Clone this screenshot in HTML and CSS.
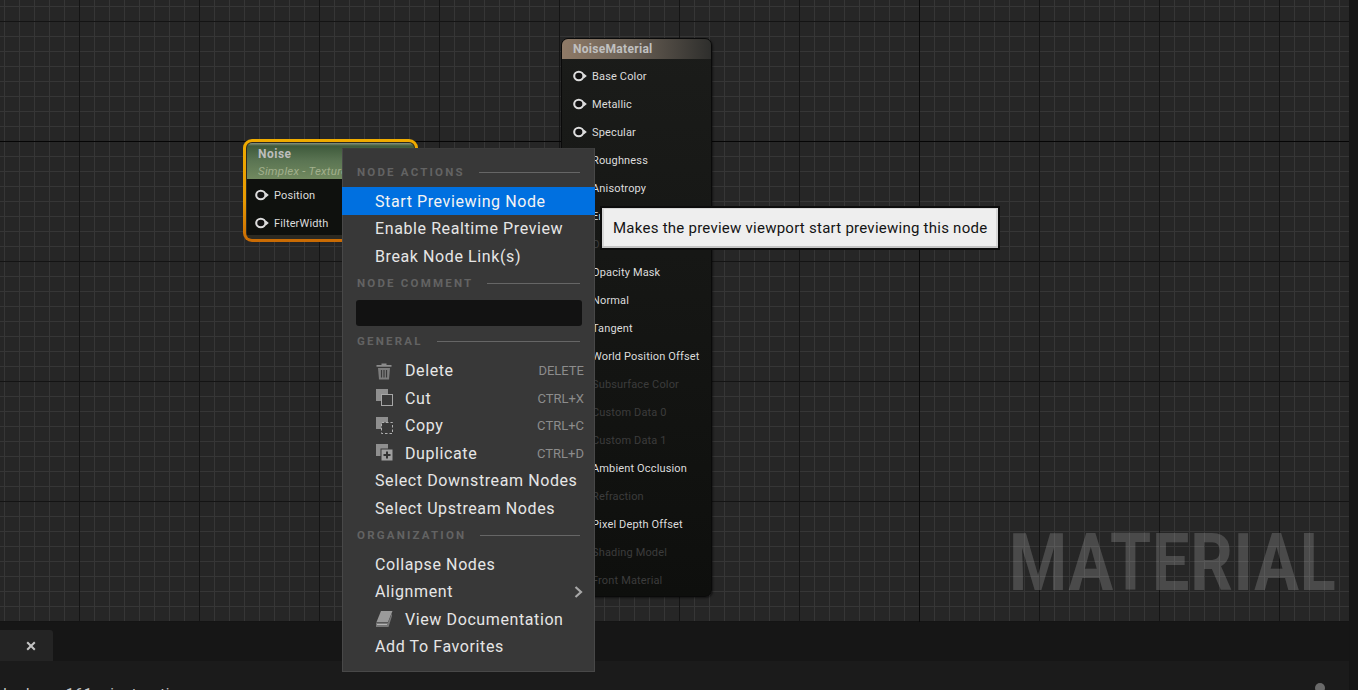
FILE: index.html
```html
<!DOCTYPE html>
<html lang="en">
<head>
    <meta charset="UTF-8">
    <title>Material Editor</title>
    <link rel="stylesheet" href="styles.css">
</head>
<body>
    <svg class="defs" width="0" height="0">
        <symbol id="pin" viewBox="0 0 14 12">
            <ellipse cx="5.8" cy="6" rx="4.6" ry="4.2" fill="#111" stroke="#dcdcdc" stroke-width="2.1"/>
            <path d="M10.8 3.6 L13.8 6 L10.8 8.4 Z" fill="#dcdcdc"/>
        </symbol>
    </svg>

    <div class="main">
        <div class="graph">
            <div class="watermark">MATERIAL</div>

            <div class="node-noise">
                <div class="noise-inner">
                    <div class="noise-head">
                        <div class="node-title">Noise</div>
                        <div class="node-sub">Simplex - Texture Based</div>
                    </div>
                    <div class="noise-body">
                        <div class="pin-row"><svg class="pin"><use href="#pin"/></svg><span>Position</span></div>
                        <div class="pin-row"><svg class="pin"><use href="#pin"/></svg><span>FilterWidth</span></div>
                    </div>
                </div>
            </div>

            <div class="node-material">
                <div class="material-head"><div class="node-title">NoiseMaterial</div></div>
                <div class="material-body">
                    <div class="pin-row"><svg class="pin"><use href="#pin"/></svg><span>Base Color</span></div>
                    <div class="pin-row"><svg class="pin"><use href="#pin"/></svg><span>Metallic</span></div>
                    <div class="pin-row"><svg class="pin"><use href="#pin"/></svg><span>Specular</span></div>
                    <div class="pin-row"><svg class="pin"><use href="#pin"/></svg><span>Roughness</span></div>
                    <div class="pin-row"><svg class="pin"><use href="#pin"/></svg><span>Anisotropy</span></div>
                    <div class="pin-row"><svg class="pin"><use href="#pin"/></svg><span>Emissive Color</span></div>
                    <div class="pin-row dim"><span>Opacity</span></div>
                    <div class="pin-row"><svg class="pin"><use href="#pin"/></svg><span>Opacity Mask</span></div>
                    <div class="pin-row"><svg class="pin"><use href="#pin"/></svg><span>Normal</span></div>
                    <div class="pin-row"><svg class="pin"><use href="#pin"/></svg><span>Tangent</span></div>
                    <div class="pin-row"><svg class="pin"><use href="#pin"/></svg><span>World Position Offset</span></div>
                    <div class="pin-row dim"><span>Subsurface Color</span></div>
                    <div class="pin-row dim"><span>Custom Data 0</span></div>
                    <div class="pin-row dim"><span>Custom Data 1</span></div>
                    <div class="pin-row"><svg class="pin"><use href="#pin"/></svg><span>Ambient Occlusion</span></div>
                    <div class="pin-row dim"><span>Refraction</span></div>
                    <div class="pin-row"><svg class="pin"><use href="#pin"/></svg><span>Pixel Depth Offset</span></div>
                    <div class="pin-row dim"><span>Shading Model</span></div>
                    <div class="pin-row dim"><span>Front Material</span></div>
                </div>
            </div>
        </div>

        <div class="tabbar">
            <div class="tab"><svg class="tab-close" viewBox="0 0 10 10"><path d="M1.2 1.2 L8.8 8.8 M8.8 1.2 L1.2 8.8" stroke="#c4c4c4" stroke-width="2"/></svg></div>
        </div>

        <div class="panel">
            <div class="stats">shader: 161 instructions</div>
            <div class="panel-dot"></div>
        </div>
    </div>

    <div class="menu">
        <div class="menu-heading"><span>NODE ACTIONS</span><i></i></div>
        <div class="menu-item active">Start Previewing Node</div>
        <div class="menu-item">Enable Realtime Preview</div>
        <div class="menu-item">Break Node Link(s)</div>

        <div class="menu-heading"><span>NODE COMMENT</span><i></i></div>
        <div class="comment-box"></div>

        <div class="menu-heading"><span>GENERAL</span><i></i></div>
        <div class="menu-item">
            <svg class="menu-icon" viewBox="0 0 18 18">
                <path d="M6.5 1.5 H11.5 V3 H16.5 V4.8 H1.5 V3 H6.5 Z" fill="#8c8c8c"/>
                <path d="M3 6 H15 L14 17.5 H4 Z" fill="#7c7c7c"/>
                <path d="M6.5 8 V15.5 M9 8 V15.5 M11.5 8 V15.5" stroke="#393939" stroke-width="1.2"/>
            </svg>
            <span>Delete</span><em>DELETE</em>
        </div>
        <div class="menu-item">
            <svg class="menu-icon" viewBox="0 0 18 18">
                <rect x="1" y="0" width="12" height="12" fill="#8f8f8f"/>
                <rect x="6.5" y="5.5" width="11" height="11" fill="#383838" stroke="#a6a6a6"/>
            </svg>
            <span>Cut</span><em>CTRL+X</em>
        </div>
        <div class="menu-item">
            <svg class="menu-icon" viewBox="0 0 18 18">
                <rect x="1" y="0" width="12" height="12" fill="#8f8f8f"/>
                <rect x="6.5" y="5.5" width="11" height="11" fill="#383838" stroke="#b0b0b0" stroke-dasharray="2.5 2"/>
            </svg>
            <span>Copy</span><em>CTRL+C</em>
        </div>
        <div class="menu-item">
            <svg class="menu-icon" viewBox="0 0 18 18">
                <rect x="1" y="0" width="12" height="12" fill="#8f8f8f"/>
                <rect x="6" y="5" width="12" height="12" fill="#a0a0a0" stroke="#383838"/>
                <path d="M12 7.5 V14.5 M8.5 11 H15.5" stroke="#333" stroke-width="2"/>
            </svg>
            <span>Duplicate</span><em>CTRL+D</em>
        </div>
        <div class="menu-item">Select Downstream Nodes</div>
        <div class="menu-item">Select Upstream Nodes</div>

        <div class="menu-heading"><span>ORGANIZATION</span><i></i></div>
        <div class="menu-item">Collapse Nodes</div>
        <div class="menu-item">Alignment
            <svg class="chevron" viewBox="0 0 9 12"><path d="M1.5 1 L7 6 L1.5 11" fill="none" stroke="#a8a8a8" stroke-width="2.2"/></svg>
        </div>
        <div class="menu-item">
            <svg class="menu-icon" viewBox="0 0 18 18">
                <path d="M6 1 H17.5 L13 12 H1.5 Z" fill="#9a9a9a"/>
                <path d="M1 12.5 H13 L17 3 V6 L13.5 17 H1 Z" fill="#777"/>
                <path d="M2 14.5 H12" stroke="#b5b5b5"/>
            </svg>
            <span>View Documentation</span>
        </div>
        <div class="menu-item">Add To Favorites</div>
    </div>

    <div class="tooltip">Makes the preview viewport start previewing this node</div>
</body>
</html>
```

FILE: styles.css
```css
* {
    box-sizing: border-box;
}
html, body {
    margin: 0;
    height: 690px;
    overflow: hidden;
}
body {
    background: #151515;
    font-family: Roboto, "Liberation Sans", sans-serif;
    position: relative;
}
.defs {
    position: absolute;
}
.main {
    width: 1349px;
    height: 690px;
    display: flex;
    flex-direction: column;
}

/* graph */
.graph {
    position: relative;
    height: 622px;
    overflow: hidden;
    background-color: #262626;
    background-image:
        linear-gradient(to right, #0a0a0a 1px, transparent 1px),
        linear-gradient(to bottom, #050505 1px, transparent 1px),
        linear-gradient(to right, #141414 1px, transparent 1px),
        linear-gradient(to bottom, #141414 1px, transparent 1px),
        linear-gradient(to right, #363636 1px, transparent 1px),
        linear-gradient(to bottom, #363636 1px, transparent 1px);
    background-size: 1px 100%, 100% 1px, 120px 120px, 120px 120px, 15px 15px, 15px 15px;
    background-position: 919px 0, 0 141px, 79px 21px, 79px 21px, 4px 6px, 4px 6px;
    background-repeat: no-repeat, no-repeat, repeat, repeat, repeat, repeat;
}
.watermark {
    position: absolute;
    left: 1009px;
    top: 516px;
    font-weight: 700;
    font-size: 80px;
    line-height: 94px;
    letter-spacing: 1px;
    color: rgba(255, 255, 255, 0.17);
    white-space: nowrap;
    transform: scaleX(0.83);
    transform-origin: left top;
}

/* nodes */
.node-title {
    font-size: 12px;
    font-weight: 700;
    letter-spacing: 0.5px;
    color: #bdbdbd;
}
.node-sub {
    font-size: 11.5px;
    font-style: italic;
    letter-spacing: 0.25px;
    color: #a2b08c;
    margin-top: 3px;
    white-space: nowrap;
}
.pin-row {
    height: 28px;
    display: flex;
    align-items: center;
    font-size: 11px;
    letter-spacing: 0.15px;
    color: #dcdcdc;
}
.pin {
    width: 14px;
    height: 12px;
    flex: none;
    margin-right: 5px;
}
.pin-row.dim {
    color: #3c3c3c;
    padding-left: 19px;
}
.node-noise {
    position: absolute;
    left: 243px;
    top: 139px;
    width: 175px;
    height: 103px;
    padding: 3px;
    border-radius: 9px;
    background: linear-gradient(to bottom, #f0ac00, #e89a02 60%, #c96a04);
}
.noise-inner {
    height: 100%;
    padding: 1px 1px 3px;
    border-radius: 6px;
    background: #2c2a22;
    overflow: hidden;
}
.noise-head {
    height: 36px;
    padding: 4px 0 0 11px;
    border-radius: 5px 5px 0 0;
    background: linear-gradient(to bottom, #88937f 0, #3f5a3c 3px, #5b7553 18px, #71895f 36px);
}
.noise-body {
    height: 56px;
    background: #0f110e;
    padding: 2px 0 0 8px;
}
.node-material {
    position: absolute;
    left: 561px;
    top: 38px;
    width: 151px;
    height: 559px;
    border: 1px solid #0a0a0a;
    border-radius: 7px;
    background: linear-gradient(to bottom, #1b1c1a, #0e0f0d);
    overflow: hidden;
    box-shadow: 1px 1px 2px rgba(0, 0, 0, 0.5);
}
.material-head {
    height: 20px;
    padding: 3px 0 0 11px;
    background: linear-gradient(to right, #8f7a67, #6b6156 45%, #2e2e2c);
}
.material-head .node-title {
    color: #c0c0c0;
    letter-spacing: 0.3px;
}
.material-body {
    padding: 3px 0 0 11px;
}

/* bottom panels */
.tabbar {
    height: 39px;
    padding-top: 8px;
    background: #161616;
}
.tab {
    width: 53px;
    height: 31px;
    background: #242424;
    border-radius: 0 3px 0 0;
    display: flex;
    align-items: center;
    justify-content: flex-end;
    padding-right: 17px;
}
.tab-close {
    width: 10px;
    height: 10px;
}
.panel {
    position: relative;
    flex: 1;
    background: #1b1b1b;
    overflow: hidden;
}
.stats {
    margin: 24px 0 0 -5px;
    font-size: 15px;
    letter-spacing: 0.6px;
    word-spacing: 13px;
    color: #c8c8c8;
    white-space: nowrap;
}
.panel-dot {
    position: absolute;
    left: 1315px;
    top: 22px;
    width: 10px;
    height: 10px;
    border-radius: 50%;
    background: #6a6a6a;
}

/* context menu */
.menu {
    position: absolute;
    left: 342px;
    top: 148px;
    width: 253px;
    height: 524px;
    background: #383838;
    border: 1px solid #484848;
    border-top-color: #3c3c3c;
    padding-top: 9.5px;
}
.menu-heading {
    height: 18px;
    margin: 4.5px 14px 0;
    display: flex;
    align-items: center;
    gap: 14px;
    font-size: 11.5px;
    font-weight: 700;
    letter-spacing: 2.2px;
    color: #636363;
    white-space: nowrap;
}
.menu-heading i {
    flex: 1;
    height: 1px;
    background: #666;
}
.menu-item {
    position: relative;
    height: 27.5px;
    display: flex;
    align-items: center;
    padding: 1px 0 0 32px;
    font-size: 16px;
    letter-spacing: 0.6px;
    color: #e6e6e6;
    white-space: nowrap;
}
.menu-item.active {
    margin: 0 -1px;
    padding-left: 33px;
    background: #0070e0;
    color: #f4f4f4;
}
.menu-icon {
    width: 18px;
    height: 18px;
    margin-right: 12px;
    flex: none;
}
.menu-item em {
    margin-left: auto;
    margin-right: 10px;
    font-style: normal;
    font-size: 13px;
    letter-spacing: 0;
    color: #8c8c8c;
}
.chevron {
    width: 9px;
    height: 12px;
    margin-left: auto;
    margin-right: 11px;
}
.comment-box {
    height: 26px;
    margin: 8px 12px 6px 13px;
    background: #121212;
    border-radius: 3px;
}
.menu-heading + .menu-item {
    margin-top: 6px;
}
.comment-box + .menu-heading + .menu-item {
    margin-top: 6.5px;
}

/* tooltip */
.tooltip {
    position: absolute;
    left: 600px;
    top: 206px;
    width: 400px;
    height: 44px;
    border: 2px solid #0c0c0c;
    background: #eeeeee;
    box-shadow: inset 0 -2px 0 #c4c4c4, inset 2px 0 0 #d6d6d6, inset -2px 0 0 #d6d6d6, inset 0 1px 0 #d6d6d6;
    display: flex;
    align-items: center;
    padding-left: 11px;
    font-size: 15px;
    letter-spacing: 0.25px;
    color: #141414;
    white-space: nowrap;
}
```
